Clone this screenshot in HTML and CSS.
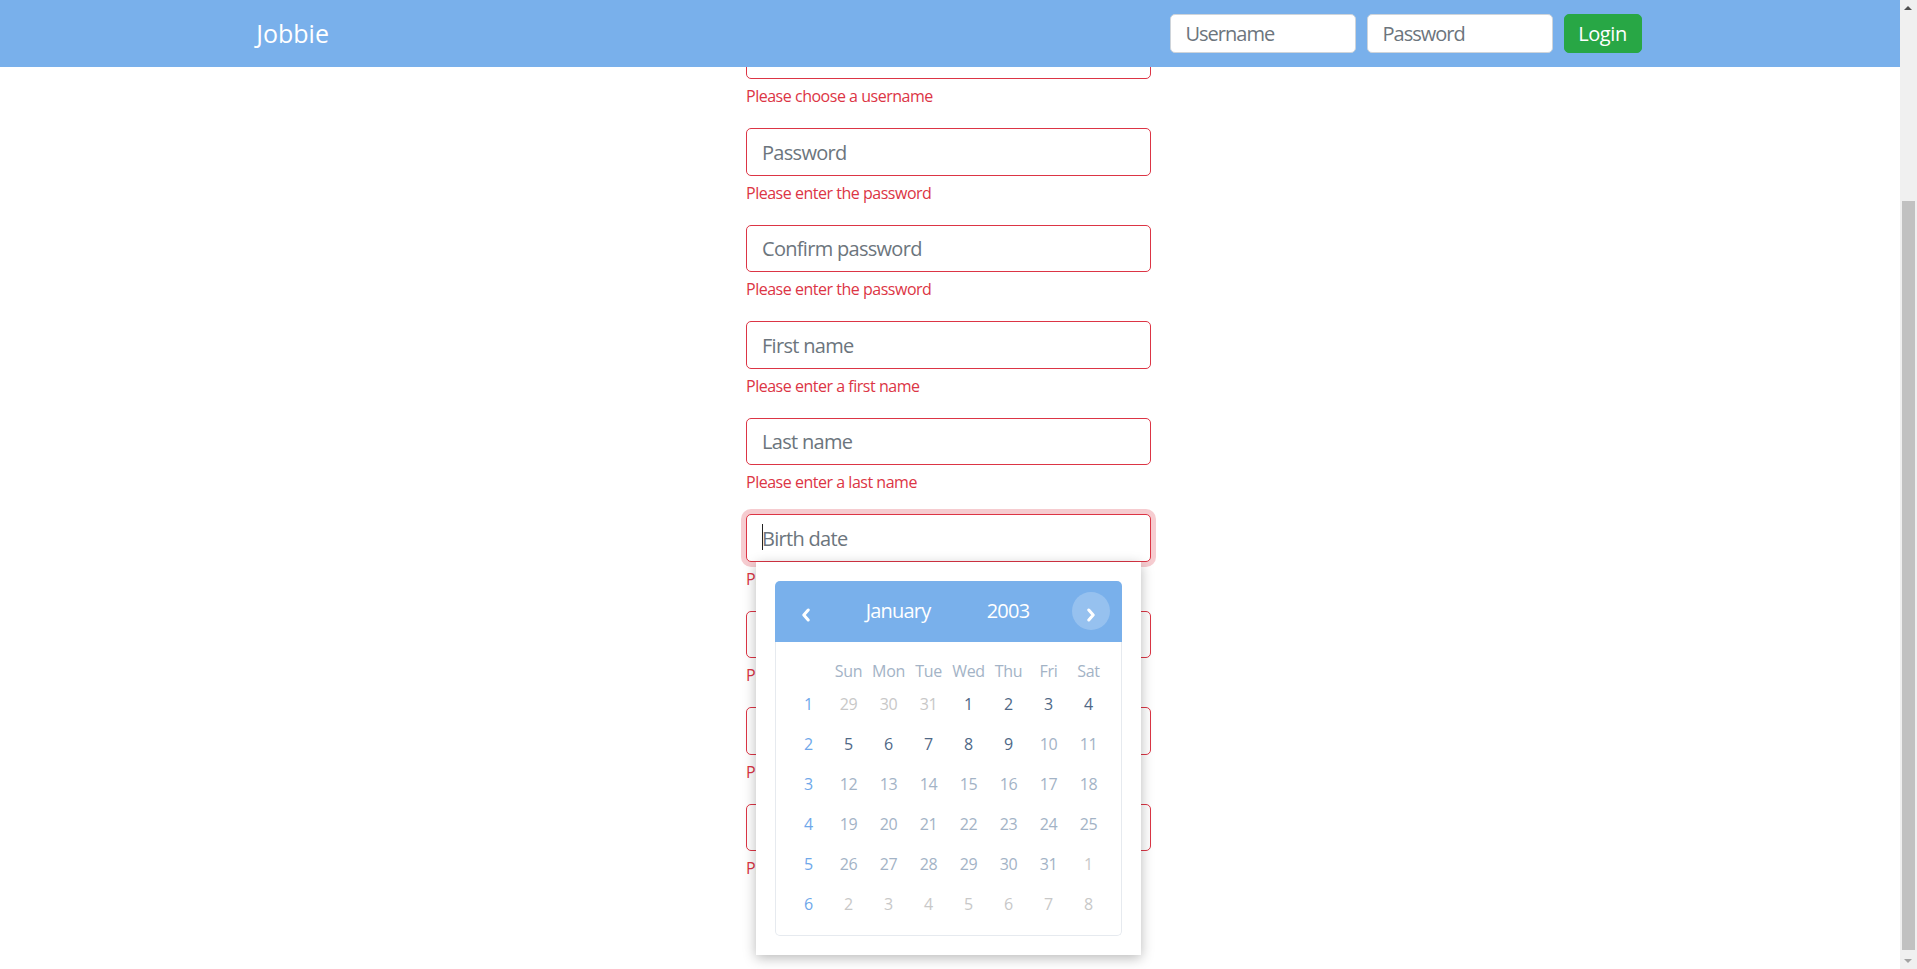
FILE: index.html
```html
<!DOCTYPE html>
<html lang="en">
<head>
<meta charset="utf-8">
<title>Jobbie – Sign up</title>
<link rel="stylesheet" href="styles.css">
</head>
<body>
<nav class="navbar">
  <div class="nav-inner">
    <a class="brand" href="#">Jobbie</a>
    <form class="login-form">
      <input class="nav-input" type="text" placeholder="Username">
      <input class="nav-input" type="password" placeholder="Password">
      <button class="btn-login" type="button">Login</button>
    </form>
  </div>
</nav>

<main class="page">
  <form class="register">
    <div class="field">
      <input class="input" type="text" placeholder="Username">
      <div class="error">Please choose a username</div>
    </div>
    <div class="field">
      <input class="input" type="password" placeholder="Password">
      <div class="error">Please enter the password</div>
    </div>
    <div class="field">
      <input class="input" type="password" placeholder="Confirm password">
      <div class="error">Please enter the password</div>
    </div>
    <div class="field">
      <input class="input" type="text" placeholder="First name">
      <div class="error">Please enter a first name</div>
    </div>
    <div class="field">
      <input class="input" type="text" placeholder="Last name">
      <div class="error">Please enter a last name</div>
    </div>
    <div class="field">
      <div class="date-wrap">
        <input class="input is-focused" type="text" placeholder="Birth date">
        <span class="caret"></span>
        <div class="datepicker">
          <div class="cal">
            <div class="cal-head">
              <button class="cal-nav" type="button" aria-label="Previous month"><svg viewBox="0 0 10 14"><polyline points="7.2,2 2.8,7 7.2,12"/></svg></button>
              <span class="cal-title">January</span>
              <span class="cal-title">2003</span>
              <span></span>
              <button class="cal-nav next" type="button" aria-label="Next month"><svg viewBox="0 0 10 14"><polyline points="2.8,2 7.2,7 2.8,12"/></svg></button>
            </div>
            <div class="cal-body">
              <div class="cal-grid">
                <span></span><span class="dow">Sun</span><span class="dow">Mon</span><span class="dow">Tue</span><span class="dow">Wed</span><span class="dow">Thu</span><span class="dow">Fri</span><span class="dow">Sat</span>
                <span class="wk">1</span><span class="d out">29</span><span class="d out">30</span><span class="d out">31</span><span class="d on">1</span><span class="d on">2</span><span class="d on">3</span><span class="d on">4</span>
                <span class="wk">2</span><span class="d on">5</span><span class="d on">6</span><span class="d on">7</span><span class="d on">8</span><span class="d on">9</span><span class="d">10</span><span class="d">11</span>
                <span class="wk">3</span><span class="d">12</span><span class="d">13</span><span class="d">14</span><span class="d">15</span><span class="d">16</span><span class="d">17</span><span class="d">18</span>
                <span class="wk">4</span><span class="d">19</span><span class="d">20</span><span class="d">21</span><span class="d">22</span><span class="d">23</span><span class="d">24</span><span class="d">25</span>
                <span class="wk">5</span><span class="d">26</span><span class="d">27</span><span class="d">28</span><span class="d">29</span><span class="d">30</span><span class="d">31</span><span class="d out">1</span>
                <span class="wk">6</span><span class="d out">2</span><span class="d out">3</span><span class="d out">4</span><span class="d out">5</span><span class="d out">6</span><span class="d out">7</span><span class="d out">8</span>
              </div>
            </div>
          </div>
        </div>
      </div>
      <div class="error">Please enter a birth date</div>
    </div>
    <div class="field">
      <input class="input" type="email" placeholder="Email">
      <div class="error">Please enter an email</div>
    </div>
    <div class="field">
      <input class="input" type="text" placeholder="Phone number">
      <div class="error">Please enter a phone number</div>
    </div>
    <div class="field">
      <input class="input" type="text" placeholder="City">
      <div class="error">Please enter a city</div>
    </div>
    <div class="actions"><button class="btn-submit" type="button">Sign up</button></div>
  </form>
</main>

<div class="scrollbar" aria-hidden="true">
  <span class="sb-up"></span>
  <span class="sb-thumb"></span>
  <span class="sb-down"></span>
</div>
<script src="script.js"></script>
</body>
</html>
```

FILE: styles.css
```css
* { box-sizing: border-box; }

html { font-size: 20px; }

body {
  margin: 0 17px 0 0;
  padding-top: 67px;
  font-family: "Segoe UI", "Open Sans", "Noto Sans", sans-serif;
  font-size: 20px;
  line-height: 1.5;
  letter-spacing: -0.04em;
  color: #212529;
  background: #fff;
}

/* navbar */
.navbar {
  position: fixed;
  top: 0;
  left: 0;
  right: 17px;
  height: 67px;
  background: #79b0eb;
  z-index: 100;
}
.nav-inner {
  max-width: 1425px;
  height: 100%;
  margin: 0 auto;
  padding: 0 21px 0 18.75px;
  display: flex;
  align-items: center;
  justify-content: space-between;
}
.brand {
  font-size: 25px;
  line-height: 37.5px;
  letter-spacing: 0;
  color: #fff;
  text-decoration: none;
}
.login-form {
  display: flex;
  align-items: center;
  gap: 11px;
  margin: 0;
}
.nav-input {
  width: 186px;
  height: 39px;
  padding: 0 15px;
  font-family: inherit;
  font-size: 20px;
  letter-spacing: -0.05em;
  color: #495057;
  background: #fff;
  border: 1px solid #ced4da;
  border-radius: 5px;
  outline: none;
}
.nav-input::placeholder,
.input::placeholder { color: #6c757d; opacity: 1; }

.btn-login {
  width: 78px;
  height: 39px;
  padding: 0;
  font-family: inherit;
  font-size: 20px;
  letter-spacing: -0.02em;
  color: #fff;
  background: #28a745;
  border: 1px solid #28a745;
  border-radius: 5px;
}

/* page */
.page {
  max-width: 1425px;
  margin: 0 auto;
  padding: 202.8px 21.75px 0 18.75px;
}
.register {
  width: 405px;
  margin: 0 auto;
}
.field { margin-bottom: 20px; }

.input {
  display: block;
  width: 100%;
  height: 47.5px;
  padding: 7.5px 15px;
  font-family: inherit;
  font-size: 20px;
  line-height: 30px;
  letter-spacing: -0.035em;
  color: #495057;
  background: #fff;
  border: 1px solid #dc3545;
  border-radius: 5px;
  outline: none;
}
.input.is-focused {
  box-shadow: 0 0 0 5px rgba(220, 53, 69, .25);
  caret-color: transparent;
}
.error {
  margin-top: 5px;
  font-size: 16px;
  line-height: 24px;
  letter-spacing: -0.03em;
  color: #dc3545;
}

.actions {
  display: flex;
  justify-content: center;
  padding-bottom: 24px;
}
.btn-submit {
  width: 120px;
  height: 47.5px;
  font-family: inherit;
  font-size: 20px;
  color: #fff;
  background: #79b0eb;
  border: 0;
  border-radius: 5px;
}

/* date picker */
.date-wrap { position: relative; }
.caret {
  position: absolute;
  left: 16px;
  top: 10px;
  width: 1px;
  height: 26px;
  background: #222;
}
.datepicker {
  position: absolute;
  top: 100%;
  left: 10px;
  width: 385px;
  padding: 19px;
  background: #fff;
  box-shadow: 0 3px 12px rgba(0, 0, 0, .28);
  z-index: 10;
}
.cal-head {
  display: grid;
  grid-template-columns: 38px 146px 74px 1fr 38px;
  align-items: center;
  height: 61px;
  padding: 0 12px;
  background: #79b0eb;
  border-radius: 5px 5px 0 0;
  color: #fff;
  font-size: 20px;
}
.cal-title { text-align: center; line-height: 1.5; }
.cal-nav {
  width: 38px;
  height: 38px;
  padding: 0;
  border: 0;
  border-radius: 50%;
  background: transparent;
  display: flex;
  align-items: center;
  justify-content: center;
}
.cal-nav.next { background: rgba(255, 255, 255, .22); }
.cal-nav svg {
  width: 10px;
  height: 14px;
  margin-top: 8px;
  fill: none;
  stroke: #fff;
  stroke-width: 3;
  stroke-linecap: round;
  stroke-linejoin: round;
}
.cal-body {
  border: 1px solid #e6eaef;
  border-top: 0;
  border-radius: 0 0 5px 5px;
  padding: 17px 0 11px;
}
.cal-grid {
  display: grid;
  grid-template-columns: repeat(8, 40px);
  grid-template-rows: 25px repeat(6, 40px);
  justify-content: center;
  align-items: center;
  justify-items: center;
  font-size: 16px;
  line-height: 1;
  letter-spacing: -0.02em;
}
.dow { color: #a3b3c6; }
.wk { color: #6fa8ea; }
.d { color: #a3b3c6; }
.d.on { color: #4f6886; }
.d.out { color: #c8c8c8; }

/* window scrollbar (classic look) */
.scrollbar {
  position: fixed;
  top: 0;
  right: 0;
  bottom: 0;
  width: 17px;
  background: #f0f0f0;
  z-index: 200;
}
.sb-thumb {
  position: absolute;
  left: 2px;
  right: 2px;
  top: 201px;
  height: 749px;
  background: #c1c1c1;
}
.sb-up,
.sb-down {
  position: absolute;
  left: 4px;
  width: 0;
  height: 0;
  border-left: 4.5px solid transparent;
  border-right: 4.5px solid transparent;
}
.sb-up { top: 6px; border-bottom: 4.5px solid #505050; }
.sb-down { bottom: 6px; border-top: 4.5px solid #a3a3a3; }
```

FILE: script.js
```js
window.scrollTo(0, 238);
```
